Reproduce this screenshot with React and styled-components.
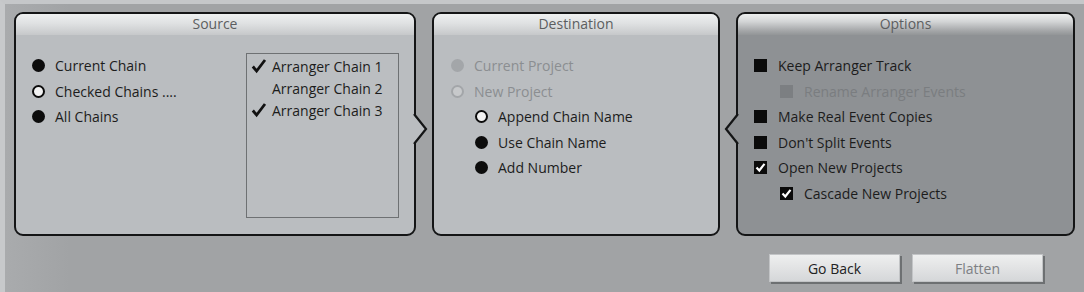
import React from "react";
import styled, { createGlobalStyle } from "styled-components";

const GlobalStyle = createGlobalStyle`
	html, body {
		margin: 0;
		padding: 0;
		background: #a2a4a6;
	}
	body {
		font-family: "Open Sans", "Noto Sans", "DejaVu Sans", sans-serif;
		font-size: 14px;
		color: #1c1c1c;
	}
`;

const Window = styled.div`
	width: 1084px;
	height: 292px;
	box-sizing: border-box;
	border-top: 4px solid #c5c7c9;
	border-left: 5px solid #c7c9cb;
	padding: 8px 0 0 9px;
	background: linear-gradient(90deg, #a9abad 0%, #a1a3a5 6%, #a1a3a5 100%);
	display: flex;
	flex-direction: column;
`;

const PanelRow = styled.div`
	display: flex;
	gap: 16px;
	height: 224px;
`;

const Panel = styled.div`
	position: relative;
	width: ${(p) => p.$width}px;
	box-sizing: border-box;
	border: 2px solid #141516;
	border-radius: 9px;
	background: ${(p) => (p.$dark ? "#8e9194" : "#babdc0")};
	display: flex;
	flex-direction: column;
`;

const Header = styled.div`
	height: 21px;
	line-height: 20px;
	text-align: center;
	color: #5c5e60;
	font-size: 14px;
	border-radius: 7px 7px 0 0;
	background: ${(p) =>
		p.$dark
			? "linear-gradient(180deg, #eceeee 0%, #d4d6d7 35%, #a4a6a8 80%, #929597 100%)"
			: "linear-gradient(180deg, #eef0f0 0%, #dfe1e2 45%, #c6c8ca 100%)"};
`;

const Body = styled.div`
	flex: 1;
	display: flex;
	padding: ${(p) => p.$pad || "18px 15px 16px 16px"};
	box-sizing: border-box;
`;

const Column = styled.div`
	flex: 1;
	display: flex;
	flex-direction: column;
`;

const Row = styled.div`
	display: flex;
	align-items: center;
	height: 25.5px;
	padding-left: ${(p) => p.$indent || 0}px;
	color: ${(p) => (p.$disabled ? (p.$dark ? "#7a7d80" : "#8b8e91") : "#1c1c1c")};
	white-space: nowrap;
`;

const Radio = styled.span`
	width: 13px;
	height: 13px;
	border-radius: 50%;
	box-sizing: border-box;
	margin-right: 10px;
	flex-shrink: 0;
	background: ${(p) =>
		p.$ring ? (p.$disabled ? "#c7c9cb" : "#f2f2f2") : p.$disabled ? "#a3a6a9" : "#0c0c0c"};
	border: ${(p) =>
		p.$ring ? `2.5px solid ${p.$disabled ? "#a3a6a9" : "#0c0c0c"}` : "none"};
`;

const Box = styled.span`
	width: 13px;
	height: 13px;
	margin-right: 11px;
	flex-shrink: 0;
	background: ${(p) => (p.$disabled ? "#7c7f82" : "#0b0b0b")};
	display: flex;
	align-items: center;
	justify-content: center;
`;

const ListBox = styled.div`
	width: 153px;
	box-sizing: border-box;
	border: 1px solid #6e7173;
	background: #bbbec1;
	padding: 1px 0 0 4px;
	display: flex;
	flex-direction: column;
`;

const ListItem = styled.div`
	display: flex;
	align-items: center;
	height: 22px;
	white-space: nowrap;
`;

const Tick = styled.span`
	width: 21px;
	display: flex;
	align-items: center;
`;

const Notch = styled.svg`
	position: absolute;
	top: 99px;
	${(p) => (p.$side === "right" ? "right: -15px;" : "left: -15px;")}
`;

const ButtonRow = styled.div`
	display: flex;
	justify-content: flex-end;
	gap: 12px;
	margin-top: 18px;
	padding-right: 41px;
`;

const Button = styled.div`
	width: 131px;
	height: 28px;
	box-sizing: border-box;
	display: flex;
	align-items: center;
	justify-content: center;
	font-size: 14px;
	color: ${(p) => (p.$disabled ? "#7d8083" : "#222")};
	background: linear-gradient(180deg, #eeefef 0%, #e2e3e4 50%, #d5d7d9 100%);
	border: 1px solid #c2c4c6;
	box-shadow: 2px 2px 0 #6d7072;
`;

function NotchArrow({ side, fill }) {
	const right = side === "right";
	return (
		<Notch $side={side} width="17" height="32" viewBox="0 0 17 32">
			{right ? (
				<>
					<polygon points="0,0 14,16 0,32" fill={fill} />
					<polyline points="2,1 14,16 2,31" fill="none" stroke="#141516" strokeWidth="2.2" />
				</>
			) : (
				<>
					<polygon points="17,0 3,16 17,32" fill={fill} />
					<polyline points="15,1 3,16 15,31" fill="none" stroke="#141516" strokeWidth="2.2" />
				</>
			)}
		</Notch>
	);
}

function Check() {
	return (
		<svg width="11" height="11" viewBox="0 0 11 11">
			<polyline points="1.5,5.5 4.3,8.5 9.5,1.8" fill="none" stroke="#fff" strokeWidth="2.2" />
		</svg>
	);
}

function ListTick() {
	return (
		<svg width="16" height="16" viewBox="0 0 16 16">
			<polyline points="1.8,8.5 5.6,13 14,2" fill="none" stroke="#111" strokeWidth="2.8" strokeLinejoin="miter" />
		</svg>
	);
}

export default function App() {
	return (
		<>
			<GlobalStyle />
			<Window>
				<PanelRow>
					<Panel $width={402}>
						<Header>Source</Header>
						<Body>
							<Column>
								<Row><Radio />Current Chain</Row>
								<Row><Radio $ring />Checked Chains ....</Row>
								<Row><Radio />All Chains</Row>
							</Column>
							<ListBox>
								<ListItem><Tick><ListTick /></Tick>Arranger Chain 1</ListItem>
								<ListItem><Tick />Arranger Chain 2</ListItem>
								<ListItem><Tick><ListTick /></Tick>Arranger Chain 3</ListItem>
							</ListBox>
						</Body>
						<NotchArrow side="right" fill="#babdc0" />
					</Panel>

					<Panel $width={288}>
						<Header>Destination</Header>
						<Body $pad="18px 15px 16px 17px">
							<Column>
								<Row $disabled><Radio $disabled />Current Project</Row>
								<Row $disabled><Radio $disabled $ring />New Project</Row>
								<Row $indent={24}><Radio $ring />Append Chain Name</Row>
								<Row $indent={24}><Radio />Use Chain Name</Row>
								<Row $indent={24}><Radio />Add Number</Row>
							</Column>
						</Body>
					</Panel>

					<Panel $width={339} $dark>
						<Header $dark>Options</Header>
						<Body $pad="18px 15px 16px 16px">
							<Column>
								<Row><Box />Keep Arranger Track</Row>
								<Row $indent={26} $disabled $dark><Box $disabled />Rename Arranger Events</Row>
								<Row><Box />Make Real Event Copies</Row>
								<Row><Box />Don't Split Events</Row>
								<Row><Box><Check /></Box>Open New Projects</Row>
								<Row $indent={26}><Box><Check /></Box>Cascade New Projects</Row>
							</Column>
						</Body>
						<NotchArrow side="left" fill="#8e9194" />
					</Panel>
				</PanelRow>
				<ButtonRow>
					<Button>Go Back</Button>
					<Button $disabled>Flatten</Button>
				</ButtonRow>
			</Window>
		</>
	);
}
